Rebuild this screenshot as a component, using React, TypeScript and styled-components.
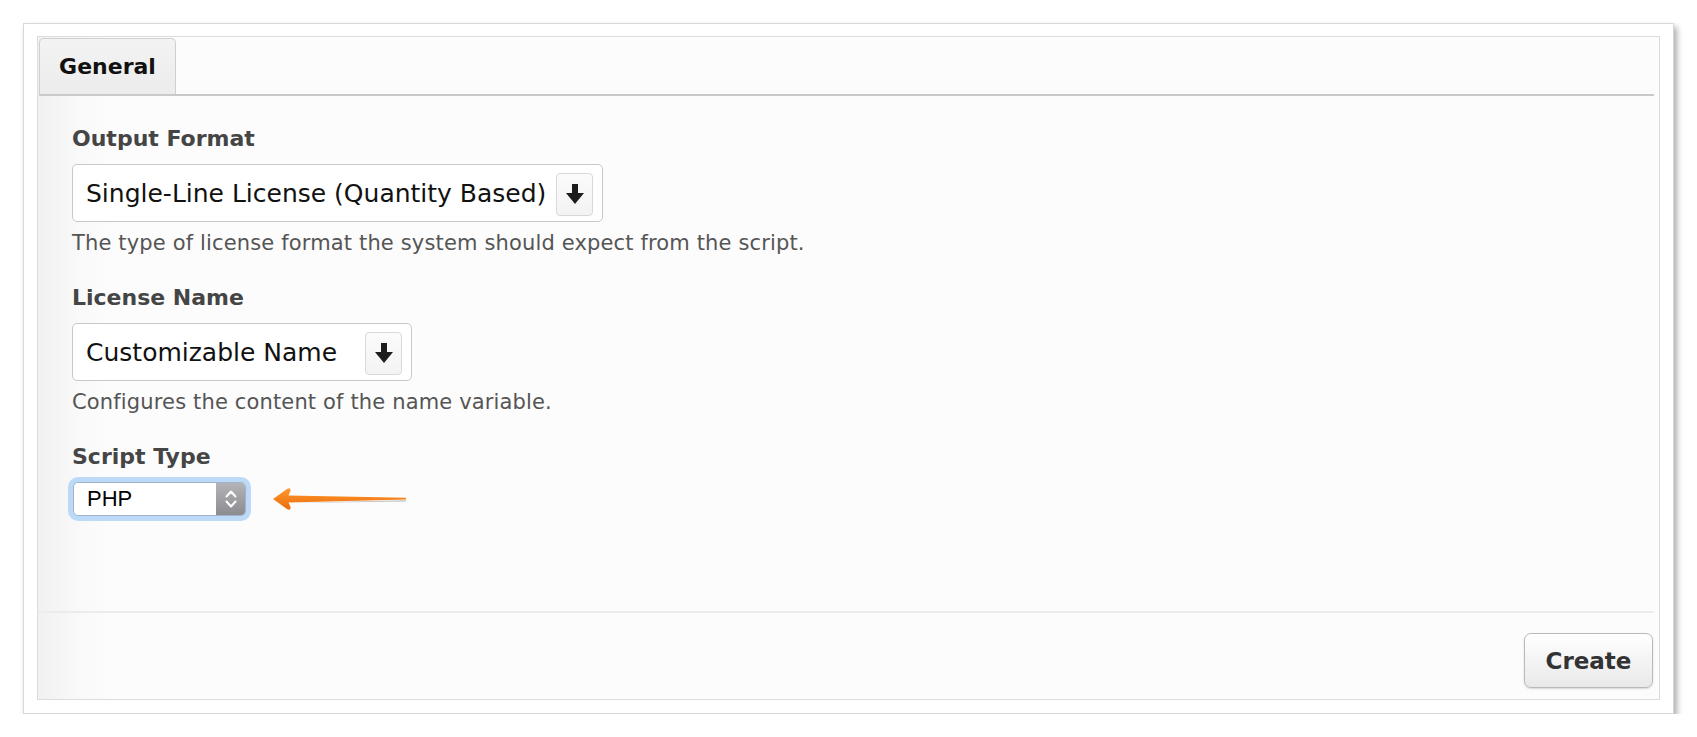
import React from "react";
import styled, {createGlobalStyle} from "styled-components";

const GlobalStyle = createGlobalStyle`
  html, body {
    margin: 0;
    padding: 0;
    background: #ffffff;
  }
  body {
    font-family: "DejaVu Sans", "Liberation Sans", sans-serif;
  }
`

const Frame = styled.div`
  box-sizing: border-box;
  width: 1651px;
  margin: 23px 0 0 23px;
  padding: 12px 13px 13px 13px;
  background: #ffffff;
  border: 1px solid #d8d8d8;
  box-shadow: 3px 4px 6px rgba(0, 0, 0, 0.33);
`

const Panel = styled.div`
  box-sizing: border-box;
  height: 664px;
  display: flex;
  flex-direction: column;
  border: 1px solid #dcdcdc;
  background: linear-gradient(to right, #f1f1f1 0px, #f9f9f9 40px, #fcfcfc 70px);
`

const TabBar = styled.div`
  display: flex;
  margin: 1px 5px 0 1px;
  border-bottom: 2px solid #c9c9c9;
`

const Tab = styled.div`
  box-sizing: border-box;
  width: 137px;
  height: 56px;
  display: flex;
  align-items: center;
  justify-content: center;
  border: 1px solid #cfcfcf;
  border-bottom: none;
  border-radius: 5px 5px 0 0;
  background: linear-gradient(to bottom, #f3f3f3, #ececec);
  font-size: 22px;
  font-weight: 700;
  color: #111;
`

const FormBody = styled.div`
  flex: 1;
  padding: 29px 0 0 34px;
`

const Field = styled.div`
  margin-bottom: 28px;
`

const Label = styled.div`
  font-size: 22px;
  line-height: 28px;
  font-weight: 700;
  color: #454545;
  margin-bottom: 11px;
`

const SelectBox = styled.div<{ $width: number }>`
  box-sizing: border-box;
  display: inline-flex;
  align-items: center;
  justify-content: space-between;
  width: ${p => p.$width}px;
  height: 58px;
  padding: 0 9px 0 13px;
  background: #ffffff;
  border: 1px solid #c8c8c8;
  border-radius: 5px;
  font-size: 25px;
  color: #111;
`

const SelectButton = styled.div`
  box-sizing: border-box;
  width: 37px;
  height: 43px;
  margin-top: 2px;
  display: flex;
  align-items: center;
  justify-content: center;
  border: 1px solid #d9d9d9;
  border-radius: 4px;
  background: linear-gradient(to bottom, #fbfbfb, #f3f3f3);
`

const Hint = styled.div`
  margin-top: 8px;
  font-size: 21px;
  line-height: 26px;
  letter-spacing: 0.15px;
  color: #555;
`

const ScriptRow = styled.div`
  display: flex;
  align-items: center;
  gap: 26px;
  margin-top: 11px;
`

const NativeSelect = styled.div`
  box-sizing: border-box;
  display: flex;
  width: 173px;
  height: 34px;
  margin-left: 1px;
  border: 1px solid #9fb4cc;
  border-radius: 5px;
  background: #ffffff;
  box-shadow: 0 0 0 5px #bcdaf8;
  overflow: hidden;
`

const NativeValue = styled.div`
  flex: 1;
  display: flex;
  align-items: center;
  padding-left: 13px;
  font-family: "Liberation Sans", Arial, sans-serif;
  font-size: 22px;
  color: #000;
`

const Stepper = styled.div`
  width: 29px;
  display: flex;
  align-items: center;
  justify-content: center;
  background: linear-gradient(to bottom, #b4b4b8, #8c8c90);
`

const Footer = styled.div`
  display: flex;
  justify-content: flex-end;
  margin-right: 5px;
  padding: 20px 1px 11px 0;
  border-top: 2px solid #ececec;
`

const CreateButton = styled.button`
  box-sizing: border-box;
  width: 129px;
  height: 55px;
  border: 1px solid #b9b9b9;
  border-radius: 7px;
  background: linear-gradient(to bottom, #ffffff, #e9e9e9);
  box-shadow: 0 1px 2px rgba(0, 0, 0, 0.15);
  font-family: "DejaVu Sans", sans-serif;
  font-size: 23px;
  font-weight: 700;
  color: #333;
  padding: 0;
`

const DownArrow = () => (
    <svg width="18" height="20" viewBox="0 0 18 20">
        <rect x="6" y="0" width="6" height="10" fill="#1c1c1c"/>
        <path d="M0 9 L18 9 L9 20 Z" fill="#1c1c1c"/>
    </svg>
);

const Chevrons = () => (
    <svg width="14" height="22" viewBox="0 0 14 22">
        <path d="M2.5 8.5 L7 3.5 L11.5 8.5" stroke="#fff" strokeWidth="2" fill="none" strokeLinecap="round" strokeLinejoin="round"/>
        <path d="M2.5 13.5 L7 18.5 L11.5 13.5" stroke="#fff" strokeWidth="2" fill="none" strokeLinecap="round" strokeLinejoin="round"/>
    </svg>
);

const PointerArrow = () => (
    <svg width="136" height="26" viewBox="0 0 136 26">
        <defs>
            <linearGradient id="arrowFill" x1="0" y1="0" x2="0" y2="1">
                <stop offset="0" stopColor="#ff9a2e"/>
                <stop offset="1" stopColor="#ec6a0a"/>
            </linearGradient>
        </defs>
        <path d="M18 17 L134 14.2 L134 15.4 Z" fill="#9a9a9a" opacity="0.6"/>
        <path
            d="M1 13 L15 3 Q19 1 18.5 5 L16.5 9.5 L134 11.8 L134 13.4 L16.5 16.5 L18.5 21 Q19 25 15 23 Z"
            fill="url(#arrowFill)"
        />
    </svg>
);

interface SelectFieldProps {
    label: string,
    value: string,
    hint: string,
    width: number
}

const SelectField: React.FC<SelectFieldProps> = ({label, value, hint, width}) => (
    <Field>
        <Label>{label}</Label>
        <SelectBox $width={width}>
            <span>{value}</span>
            <SelectButton><DownArrow/></SelectButton>
        </SelectBox>
        <Hint>{hint}</Hint>
    </Field>
);

const App = () => {
    return (
        <>
            <GlobalStyle/>
            <Frame>
                <Panel>
                    <TabBar>
                        <Tab>General</Tab>
                    </TabBar>
                    <FormBody>
                        <SelectField
                            label="Output Format"
                            value="Single-Line License (Quantity Based)"
                            hint="The type of license format the system should expect from the script."
                            width={531}
                        />
                        <SelectField
                            label="License Name"
                            value="Customizable Name"
                            hint="Configures the content of the name variable."
                            width={340}
                        />
                        <Label>Script Type</Label>
                        <ScriptRow>
                            <NativeSelect>
                                <NativeValue>PHP</NativeValue>
                                <Stepper><Chevrons/></Stepper>
                            </NativeSelect>
                            <PointerArrow/>
                        </ScriptRow>
                    </FormBody>
                    <Footer>
                        <CreateButton>Create</CreateButton>
                    </Footer>
                </Panel>
            </Frame>
        </>
    );
};

export default App;
